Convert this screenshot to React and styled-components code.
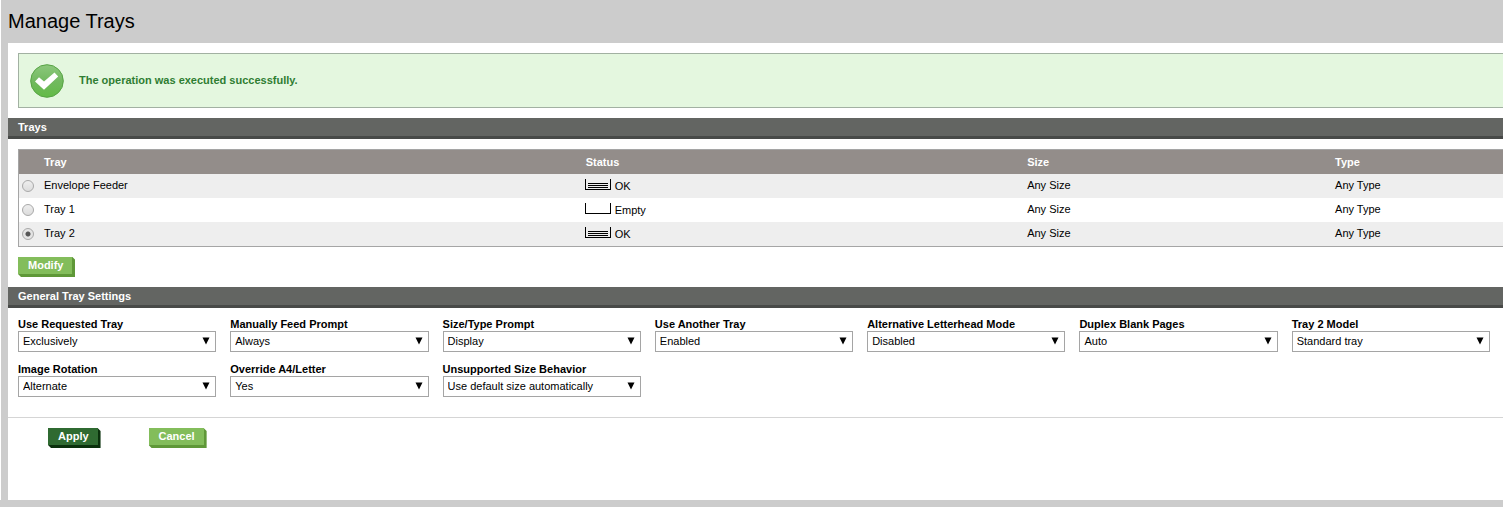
import React, { useState } from "react";
import styled, { createGlobalStyle } from "styled-components";

const GlobalStyle = createGlobalStyle`
  *, *::before, *::after { box-sizing: border-box; }
  body {
    margin: 0;
    background: #fff;
    color: #000;
    font: 11px/14px "Liberation Sans", Arial, sans-serif;
  }
`;

const Page = styled.div`
  display: flex;
  flex-direction: column;
  min-height: calc(100vh - 1px);
  border-bottom: 7px solid #ccc;
`;

const Frame = styled.div`
  display: flex;
  flex-direction: column;
  flex: 1;
  margin-left: 1px;
  padding-left: 7px;
  background: #ccc;
`;

const Title = styled.h1`
  margin: 0;
  padding: 9px 0 10px;
  font-size: 20px;
  line-height: 24px;
  font-weight: 400;
`;

const Panel = styled.main`
  flex: 1;
  padding-top: 10px;
  background: #fff;
`;

const Alert = styled.div`
  display: flex;
  align-items: center;
  gap: 14px;
  height: 55px;
  margin: 0 0 10px 10px;
  padding-left: 10px;
  border: 1px solid #a2b1a2;
  border-right: 0;
  background: #e4f7df;
`;

const AlertText = styled.p`
  margin: 0;
  padding-bottom: 2px;
  color: #2f7d32;
  font-weight: 700;
`;

const SectionTitle = styled.h2`
  margin: 0 0 10px;
  padding: 2px 10px;
  border-bottom: 3px solid #484a48;
  background: #636562;
  color: #fff;
  font-size: 11px;
  line-height: 14px;
`;

const TableBox = styled.div`
  margin: 0 0 10px 10px;
  border: 1px solid #a5a5a5;
  border-right: 0;
`;

const Table = styled.table`
  width: 100%;
  table-layout: fixed;
  border-collapse: collapse;
`;

const Col = styled.col`
  width: ${(p) => p.$w};
`;

const HeadCell = styled.th`
  height: 24px;
  padding: 0 0 0 1px;
  background: #938d8a;
  color: #fff;
  text-align: left;
`;

const Row = styled.tr`
  background: #fff;
  &:nth-child(odd) { background: #eee; }
`;

const Cell = styled.td`
  height: 24px;
  padding: 0 0 2px 1px;
`;

const StatusCell = styled(Cell)`
  padding-left: 0;
`;

const RadioCell = styled.td`
  height: 24px;
  padding: 0 0 0 3px;
`;

const Radio = styled.input`
  appearance: none;
  display: block;
  width: 12px;
  height: 12px;
  margin: 0;
  border: 1px solid #a9a9a9;
  border-radius: 50%;
  background: linear-gradient(#eee, #dcdcdc);
  &:checked {
    background: radial-gradient(circle, #555 0 2px, #e4e4e4 3px);
  }
`;

const Status = styled.span`
  display: flex;
  gap: 4px;
  align-items: flex-end;
  height: 14px;
  line-height: 12px;
`;

const TrayIcon = styled.svg`
  display: block;
  width: 26px;
  height: 11px;
  margin-bottom: 2px;
`;

const Button = styled.button`
  display: block;
  height: 20px;
  padding: 0 12px 4px 10px;
  border: 0;
  background: linear-gradient(${(p) => (p.$dark ? "#2f6a31, #2f6a31" : "#83bd5b, #83bd5b")})
      0 0 / calc(100% - 3px) calc(100% - 3px) no-repeat
    ${(p) => (p.$dark ? "#0a300c" : "#5f9838")};
  clip-path: polygon(0 0, calc(100% - 3px) 0, 100% 3px, 100% 100%, 3px 100%, 0 calc(100% - 3px));
  color: #fff;
  font: 700 11px/16px "Liberation Sans", Arial, sans-serif;
`;

const ModifyBar = styled.div`
  padding: 0 10px 10px;
`;

const Fields = styled.div`
  display: grid;
  grid-template-columns: repeat(7, 1fr);
  gap: 11px 14px;
  padding: 0 13px 20px 10px;
`;

const Field = styled.div`
  display: flex;
  flex-direction: column;
  min-width: 0;
`;

const Label = styled.label`
  font-weight: 700;
  line-height: 13px;
  white-space: nowrap;
`;

const SelectBox = styled.div`
  display: grid;
  grid-template-columns: 1fr 16px;
  border: 1px solid #a5a5a5;
  background: #fff;
`;

const Select = styled.select`
  appearance: none;
  grid-area: 1 / 1 / 2 / 3;
  width: 100%;
  height: 19px;
  padding: 0 16px 2px 4px;
  border: 0;
  background: transparent;
  color: #000;
  font: 11px/14px "Liberation Sans", Arial, sans-serif;
`;

const Arrow = styled.svg`
  grid-area: 1 / 2;
  width: 8px;
  height: 8px;
  margin: 5px 0 0 3px;
  pointer-events: none;
`;

const Actions = styled.div`
  display: flex;
  gap: 48px;
  padding: 10px 40px;
  border-top: 1px solid #d5d5d5;
`;

const TRAYS = [
  { name: "Envelope Feeder", status: "OK" },
  { name: "Tray 1", status: "Empty" },
  { name: "Tray 2", status: "OK" },
];

const SETTINGS = [
  ["Use Requested Tray", "Exclusively"],
  ["Manually Feed Prompt", "Always"],
  ["Size/Type Prompt", "Display"],
  ["Use Another Tray", "Enabled"],
  ["Alternative Letterhead Mode", "Disabled"],
  ["Duplex Blank Pages", "Auto"],
  ["Tray 2 Model", "Standard tray"],
  ["Image Rotation", "Alternate"],
  ["Override A4/Letter", "Yes"],
  ["Unsupported Size Behavior", "Use default size automatically"],
];

function SuccessIcon() {
  return (
    <svg width="36" height="36" viewBox="0 0 36 36" aria-hidden="true">
      <defs>
        <linearGradient id="disc" x1="0" y1="0" x2="0" y2="1">
          <stop offset="0" stopColor="#8cc87c" />
          <stop offset="0.5" stopColor="#72b960" />
          <stop offset="1" stopColor="#62bb46" />
        </linearGradient>
      </defs>
      <circle cx="18" cy="18" r="16.3" fill="url(#disc)" stroke="#57a345" />
      <path d="M6 18.5 L10 14.2 L15 18.6 L25.5 9.5 L29.2 13.6 L15 26.8 Z" fill="#fff" />
    </svg>
  );
}

function TrayGlyph({ loaded }) {
  return (
    <TrayIcon viewBox="0 0 26 11" shapeRendering="crispEdges" aria-hidden="true">
      <path d="M0 0H1V10H25V0H26V11H0Z" />
      {loaded && <path d="M3 4H23V5H3Z M3 6H23V7H3Z M3 8H23V9H3Z" />}
    </TrayIcon>
  );
}

function Setting({ id, label, value }) {
  return (
    <Field>
      <Label htmlFor={id}>{label}</Label>
      <SelectBox>
        <Select id={id} defaultValue={value}>
          <option>{value}</option>
        </Select>
        <Arrow viewBox="0 0 8 8" aria-hidden="true">
          <path d="M0.5 0.5H7.5L4 7.5Z" />
        </Arrow>
      </SelectBox>
    </Field>
  );
}

export default function App() {
  const [selected, setSelected] = useState("Tray 2");
  return (
    <Page>
      <GlobalStyle />
      <Frame>
        <Title>Manage Trays</Title>
        <Panel>
          <Alert role="status">
            <SuccessIcon />
            <AlertText>The operation was executed successfully.</AlertText>
          </Alert>

          <SectionTitle>Trays</SectionTitle>
          <TableBox>
            <Table>
              <colgroup>
                <Col $w="24px" />
                <Col $w="36.5%" />
                <Col $w="29.75%" />
                <Col $w="20.75%" />
                <Col />
              </colgroup>
              <thead>
                <tr>
                  <HeadCell />
                  <HeadCell>Tray</HeadCell>
                  <HeadCell>Status</HeadCell>
                  <HeadCell>Size</HeadCell>
                  <HeadCell>Type</HeadCell>
                </tr>
              </thead>
              <tbody>
                {TRAYS.map(({ name, status }) => (
                  <Row key={name}>
                    <RadioCell>
                      <Radio
                        type="radio"
                        name="tray"
                        id={name}
                        checked={selected === name}
                        onChange={() => setSelected(name)}
                      />
                    </RadioCell>
                    <Cell>
                      <label htmlFor={name}>{name}</label>
                    </Cell>
                    <StatusCell>
                      <Status>
                        <TrayGlyph loaded={status === "OK"} />
                        {status}
                      </Status>
                    </StatusCell>
                    <Cell>Any Size</Cell>
                    <Cell>Any Type</Cell>
                  </Row>
                ))}
              </tbody>
            </Table>
          </TableBox>
          <ModifyBar>
            <Button type="button">Modify</Button>
          </ModifyBar>

          <SectionTitle>General Tray Settings</SectionTitle>
          <Fields>
            {SETTINGS.map(([label, value], i) => (
              <Setting key={label} id={`setting-${i}`} label={label} value={value} />
            ))}
          </Fields>
          <Actions>
            <Button type="submit" $dark>Apply</Button>
            <Button type="button">Cancel</Button>
          </Actions>
        </Panel>
      </Frame>
    </Page>
  );
}
